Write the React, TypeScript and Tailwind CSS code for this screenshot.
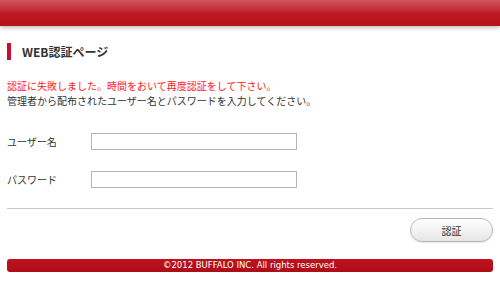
export default function App() {
  return (
    <div className="w-[500px] h-[281px] bg-white overflow-hidden text-[#333] font-['Noto_Sans_CJK_JP',sans-serif]">
      {/* Header bar */}
      <div className="h-[26px] bg-gradient-to-b from-[#d0545d] via-[#bd1a25] to-[#b80f1a] shadow-[0_2px_4px_rgba(0,0,0,0.25)]" />

      <div className="px-[7px]">
        {/* Title */}
        <div className="mt-[17px] flex items-center h-[17px]">
          <div className="w-[4px] h-[17px] bg-[#c8102e]" />
          <h1 className="ml-[11px] text-[12px] font-bold leading-[17px] text-[#333]">WEB認証ページ</h1>
        </div>

        {/* Messages */}
        <div className="mt-[18px] text-[10px] leading-[15px]">
          <p className="text-[#ff2020]">認証に失敗しました。時間をおいて再度認証をして下さい。</p>
          <p className="text-[#333]">管理者から配布されたユーザー名とパスワードを入力してください。</p>
        </div>

        {/* Form */}
        <div className="mt-[25px] flex flex-col gap-[21px]">
          <div className="flex items-center h-[17px]">
            <label className="w-[84px] text-[10px] leading-[17px]">ユーザー名</label>
            <input className="w-[206px] h-[17px] border border-[#b5b5b5] bg-white outline-none" />
          </div>
          <div className="flex items-center h-[17px]">
            <label className="w-[84px] text-[10px] leading-[17px]">パスワード</label>
            <input type="password" className="w-[206px] h-[17px] border border-[#b5b5b5] bg-white outline-none" />
          </div>
        </div>

        <div className="mt-[20px] h-px bg-[#c8c8c8]" />

        <div className="mt-[9px] flex justify-end">
          <button className="w-[83px] h-[24px] rounded-full border border-[#b8b8b8] bg-gradient-to-b from-white to-[#e6e6e6] text-[10px] text-[#333] shadow-[0_1px_1px_rgba(0,0,0,0.1)]">
            認証
          </button>
        </div>

        {/* Footer */}
        <div className="mt-[17px] h-[13px] rounded-[3px] bg-gradient-to-b from-[#c0121e] to-[#ad0c17] flex items-center justify-center">
          <span className="text-[8.5px] leading-[13px] text-white font-['DejaVu_Sans',sans-serif]">©2012 BUFFALO INC. All rights reserved.</span>
        </div>
      </div>
    </div>
  );
}
